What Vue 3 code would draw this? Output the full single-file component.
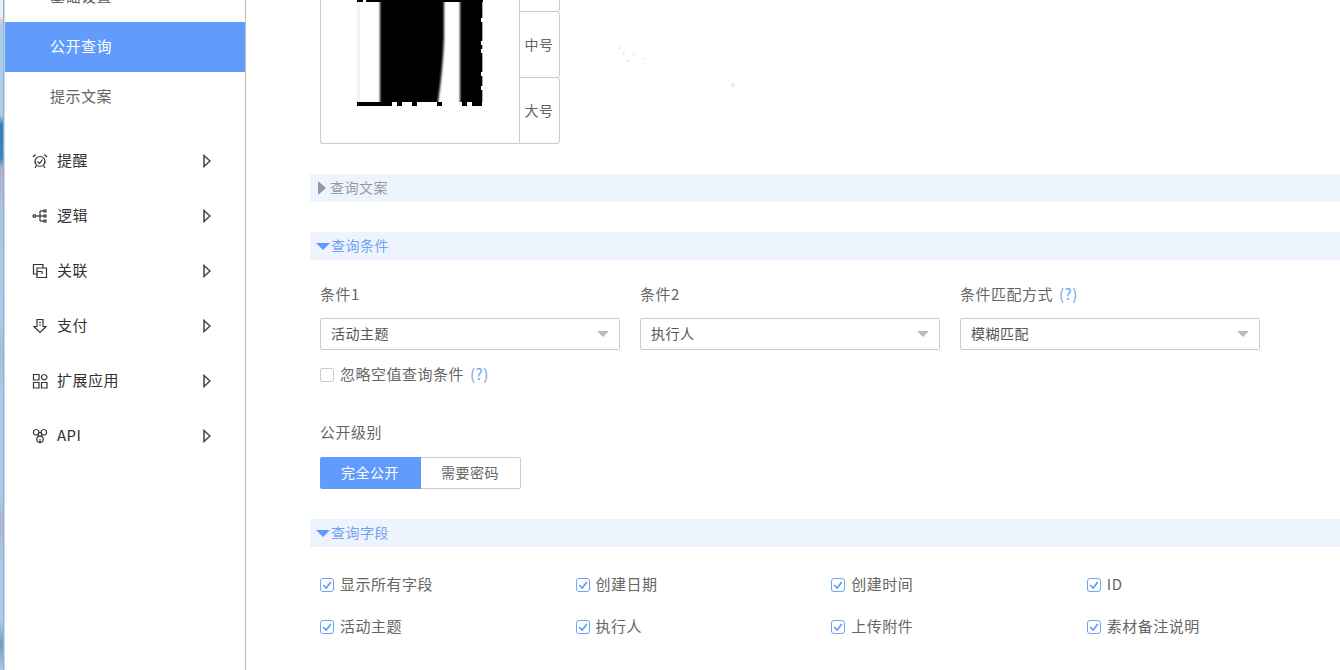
<template>
  <div class="page">
    <aside class="sidebar">
      <ul class="sub-menu">
        <li v-for="item in subItems" :key="item" class="sub-item" :class="{ active: item === '公开查询' }">{{ item }}</li>
      </ul>
      <ul class="nav-menu">
        <li v-for="nav in navItems" :key="nav.name" class="nav-item">
          <svg class="nav-icon" viewBox="0 0 16 16" fill="none" stroke="#333" stroke-width="1.2">
            <path v-for="(d, i) in nav.paths" :key="i" :d="d" />
          </svg>
          <span class="nav-name">{{ nav.name }}</span>
          <svg class="nav-arrow" viewBox="0 0 8 14" fill="none" stroke="#444" stroke-width="1.5">
            <path d="M1 1.5 L7 7 L1 12.5 Z" />
          </svg>
        </li>
      </ul>
    </aside>

    <main class="content">
      <div class="qr-row">
        <div class="qr-box">
          <svg class="qr" viewBox="0 0 126 112" width="126" height="112">
            <defs>
              <filter id="soft" x="-20%" y="0" width="140%" height="100%">
                <feGaussianBlur stdDeviation="1.2 0" />
              </filter>
            </defs>
            <rect x="0" y="0" width="126" height="4" fill="#000" />
            <rect x="6" y="0" width="3" height="4" fill="#fff" />
            <rect x="32" y="0" width="3" height="2" fill="#fff" />
            <rect x="70" y="0" width="8" height="2" fill="#fff" />
            <rect x="0" y="4" width="3" height="100" fill="#f2f2f2" />
            <path d="M23 3 H87 V40 Q86 70 81 104 H23 Z" fill="#000" filter="url(#soft)" />
            <rect x="103" y="3" width="22" height="101" fill="#000" filter="url(#soft)" />
            <rect x="110" y="3" width="15" height="101" fill="#000" />
            <rect x="0" y="104" width="35" height="4" fill="#000" />
            <rect x="40" y="104" width="5" height="4" fill="#000" />
            <rect x="55" y="104" width="5" height="4" fill="#000" />
            <rect x="80" y="104" width="5" height="4" fill="#000" />
            <rect x="105" y="104" width="5" height="4" fill="#000" />
            <rect x="115" y="104" width="10" height="4" fill="#000" />
            <rect x="124" y="20" width="2" height="4" fill="#fff" />
            <rect x="124" y="43" width="2" height="4" fill="#fff" />
            <rect x="124" y="51" width="2" height="4" fill="#fff" />
            <rect x="124" y="74" width="2" height="4" fill="#fff" />
            <rect x="124" y="88" width="2" height="4" fill="#fff" />
          </svg>
        </div>
        <div class="size-tabs">
          <button v-for="size in sizes" :key="size" class="size-tab">{{ size }}</button>
        </div>
        <svg class="specks" width="130" height="50" fill="#eee">
          <rect x="3" y="2" width="3" height="2" />
          <rect x="8" y="7" width="2" height="3" />
          <rect x="12" y="15" width="3" height="2" />
          <rect x="18" y="9" width="2" height="2" />
          <rect x="29" y="13" width="2" height="2" />
          <rect x="116" y="38" width="4" height="4" />
        </svg>
      </div>

      <div class="section-bar closed"><i class="tri-right"></i><span>查询文案</span></div>

      <div class="section-bar open cond-bar"><i class="tri-down"></i><span>查询条件</span></div>
      <div class="cond-grid">
        <div v-for="c in conditions" :key="c.label" class="cond">
          <label class="field-label">{{ c.label }}<a v-if="c.help" class="help">(?)</a></label>
          <div class="select">
            <span>{{ c.value }}</span>
            <i class="select-arrow"></i>
          </div>
        </div>
      </div>
      <label class="check-line">
        <span class="check"></span><span class="check-text">忽略空值查询条件<a class="help">(?)</a></span>
      </label>

      <div class="field-label level-label">公开级别</div>
      <div class="btn-group">
        <button class="seg on">完全公开</button>
        <button class="seg">需要密码</button>
      </div>

      <div class="section-bar open fields-bar"><i class="tri-down"></i><span>查询字段</span></div>
      <div class="fields">
        <label v-for="f in fields" :key="f" class="field-check">
          <span class="check checked">
            <svg viewBox="0 0 14 14" width="12" height="12" fill="none" stroke="#5f9bfb" stroke-width="2">
              <path d="M2.5 7 L6 10.5 L11.5 3.5" />
            </svg>
          </span><span class="check-text">{{ f }}</span>
        </label>
      </div>
    </main>
  </div>
</template>

<script setup>
const subItems = ['基础设置', '公开查询', '提示文案']

const navItems = [
  { name: '提醒', paths: ['M8 3.5 a5 5 0 1 0 0.01 0', 'M5.5 8.5 L7.5 10.5 L10.5 6.5', 'M1 4 L3.5 1.5', 'M15 4 L12.5 1.5', 'M4.5 12.5 L3 15', 'M11.5 12.5 L13 15'] },
  { name: '逻辑', paths: ['M1 8 a1.3 1.3 0 1 0 2.6 0 a1.3 1.3 0 1 0 -2.6 0', 'M3.6 8 H12', 'M8 3 V13', 'M8 3 H12', 'M8 13 H12', 'M12 2 h2 v2 h-2 z', 'M12 7 h2 v2 h-2 z', 'M12 12 h2 v2 h-2 z'] },
  { name: '关联', paths: ['M6 11 H1.5 V1.5 H11 V5', 'M5 5 H14.5 V14.5 H5 Z', 'M5 8.5 H10 V11'] },
  { name: '支付', paths: ['M5 8.5 V1.5 H11 V8.5 H14 L8 14.5 L2 8.5 Z', 'M7 4.5 H9', 'M7 7 H9'] },
  { name: '扩展应用', paths: ['M1.5 1.5 H7 V7 H1.5 Z', 'M1.5 9.5 H7 V15 H1.5 Z', 'M9.5 9.5 H15 V15 H9.5 Z', 'M12.2 1.5 a2.7 2.7 0 1 0 0.01 0'] },
  { name: 'API', paths: ['M4.2 1.5 a2.8 2.8 0 1 0 0.01 0', 'M11.8 1.5 a2.8 2.8 0 1 0 0.01 0', 'M8 8 a3.3 3.3 0 1 0 0.01 0', 'M8 4.5 a2 2 0 1 0 0.01 0', 'M8 11 V14'] }
]

const sizes = ['小号', '中号', '大号']

const conditions = [
  { label: '条件1', value: '活动主题' },
  { label: '条件2', value: '执行人' },
  { label: '条件匹配方式', value: '模糊匹配', help: true }
]

const fields = ['显示所有字段', '创建日期', '创建时间', 'ID', '活动主题', '执行人', '上传附件', '素材备注说明']
</script>

<style>
html, body {
  margin: 0;
  height: 100%;
  overflow: hidden;
  background: #fff;
}
</style>

<style scoped>
.page {
  display: flex;
  width: 1340px;
  height: 670px;
  overflow: hidden;
  font-family: "Noto Sans CJK SC", "Noto Sans", sans-serif;
  font-size: 15px;
  letter-spacing: 0.5px;
  color: #666;
  background: #fff;
}

.sidebar {
  flex: none;
  width: 240px;
  margin-left: 5px;
  border-right: 1px solid #bbb;
  position: relative;
}

/* desktop showing through on the left of the window */
.sidebar::before {
  content: '';
  position: absolute;
  left: -5px;
  top: 0;
  width: 3px;
  height: 670px;
  background: linear-gradient(#eef0f2 0, #e8eaec 18px, #e8c89c 20px, #a9cfee 24px, #a9cfee 115px, #2f7fc0 125px, #3a84c6 158px, #b4aecb 168px, #a9c6e6 215px, #a5cdef 320px, #a6bcdc 350px, #a5cdef 395px, #a5cdef 495px, #b0b2d4 520px, #a5cdef 565px, #a5cdef 620px, #6f9cc0 645px, #a5cdef 670px);
}

.sidebar::after {
  content: '';
  position: absolute;
  left: -2px;
  top: 0;
  width: 2px;
  height: 670px;
  background: linear-gradient(90deg, #7f9bb5, #e6eef6);
}

.sub-menu,
.nav-menu {
  list-style: none;
  margin: 0;
  padding: 0;
}

.sub-menu {
  margin-top: -28px;
}

.sub-item {
  height: 50px;
  line-height: 48px;
  padding-left: 45px;
  color: #666;
}

.sub-item.active {
  background: #619cfd;
  color: #fff;
}

.nav-menu {
  margin-top: 12px;
}

.nav-item {
  display: flex;
  align-items: center;
  height: 55px;
  padding-left: 27px;
  color: #333;
}

.nav-icon {
  width: 16px;
  height: 16px;
  flex: none;
  margin-top: -1px;
}

.nav-name {
  margin: -4px 0 0 9px;
  width: 146px;
}

.nav-arrow {
  width: 8px;
  height: 14px;
  flex: none;
  margin-top: -1px;
}

.content {
  flex: 1;
  min-width: 0;
  padding-left: 64px;
}

.qr-row {
  display: flex;
  align-items: flex-start;
  margin: -56px 0 0 10px;
}

.qr-box {
  box-sizing: border-box;
  width: 199px;
  height: 200px;
  border: 1px solid #ccc;
  border-right: 0;
  border-radius: 3px 0 0 3px;
  padding: 53px 0 0 36px;
}

.qr {
  display: block;
}

.size-tabs {
  display: flex;
  flex-direction: column;
  width: 41px;
  margin-top: 1px;
}

.size-tab {
  box-sizing: border-box;
  height: 67px;
  padding: 0 1px 2px 0;
  background: #fff;
  border: 1px solid #ccc;
  border-radius: 0 3px 3px 0;
  font: inherit;
  font-size: 14px;
  letter-spacing: 0.5px;
  color: #666;
}

.size-tab + .size-tab {
  margin-top: -1px;
}

.specks {
  margin: 101px 0 0 55px;
}

.section-bar {
  height: 28px;
  line-height: 28px;
  background: #eef4fd;
  display: flex;
  align-items: center;
  padding-left: 6px;
  font-size: 14px;
}

.section-bar span {
  margin-top: -2px;
}

.section-bar.closed {
  margin-top: 30px;
  color: #999;
}

.section-bar.open {
  color: #6fa3f0;
}

.cond-bar {
  margin-top: 30px;
}

.tri-right {
  width: 0;
  height: 0;
  margin: 0 4px 0 2px;
  border-left: 8px solid #999;
  border-top: 7px solid transparent;
  border-bottom: 7px solid transparent;
}

.tri-down {
  width: 0;
  height: 0;
  margin-right: 1px;
  border-top: 7px solid #5f9bfb;
  border-left: 7px solid transparent;
  border-right: 7px solid transparent;
}

.cond-grid {
  display: flex;
  gap: 20px;
  margin: 24px 0 0 10px;
}

.cond {
  width: 300px;
}

.field-label {
  display: block;
  height: 22px;
  line-height: 20px;
  color: #666;
}

.help {
  margin-left: 6px;
  color: #6f9ff0;
}

.select {
  box-sizing: border-box;
  display: flex;
  justify-content: space-between;
  align-items: center;
  height: 32px;
  margin-top: 12px;
  padding: 0 10px;
  border: 1px solid #ccc;
  border-radius: 2px;
  font-size: 14px;
  color: #555;
}

.select span {
  margin-top: -2px;
}

.select-arrow {
  width: 0;
  height: 0;
  border-top: 6px solid #bbb;
  border-left: 6px solid transparent;
  border-right: 6px solid transparent;
}

.check-line {
  display: flex;
  align-items: center;
  height: 22px;
  margin: 14px 0 0 10px;
}

.check-text {
  margin-top: -3px;
  white-space: pre;
}

.check {
  box-sizing: border-box;
  flex: none;
  display: inline-flex;
  align-items: center;
  justify-content: center;
  width: 14px;
  height: 14px;
  margin-right: 6px;
  border: 1px solid #ccc;
  border-radius: 2px;
}

.check.checked {
  border: 1.5px solid #6ea4f5;
  border-radius: 3px;
}

.level-label {
  margin: 36px 0 0 10px;
}

.btn-group {
  display: flex;
  width: 201px;
  height: 32px;
  margin: 13px 0 0 10px;
}

.seg {
  box-sizing: border-box;
  width: 100px;
  padding: 0 1px 2px 0;
  background: #fff;
  border: 1px solid #ccc;
  border-left: 0;
  border-radius: 0 2px 2px 0;
  font: inherit;
  font-size: 14px;
  letter-spacing: 0.5px;
  color: #666;
}

.seg.on {
  width: 101px;
  background: #619cfd;
  border: 0;
  border-radius: 2px 0 0 2px;
  color: #fff;
}

.fields-bar {
  margin-top: 30px;
}

.fields {
  display: grid;
  grid-template-columns: repeat(4, 255.6px);
  grid-auto-rows: 42px;
  margin: 17px 0 0 10px;
}

.field-check {
  display: flex;
  align-items: center;
}
</style>
